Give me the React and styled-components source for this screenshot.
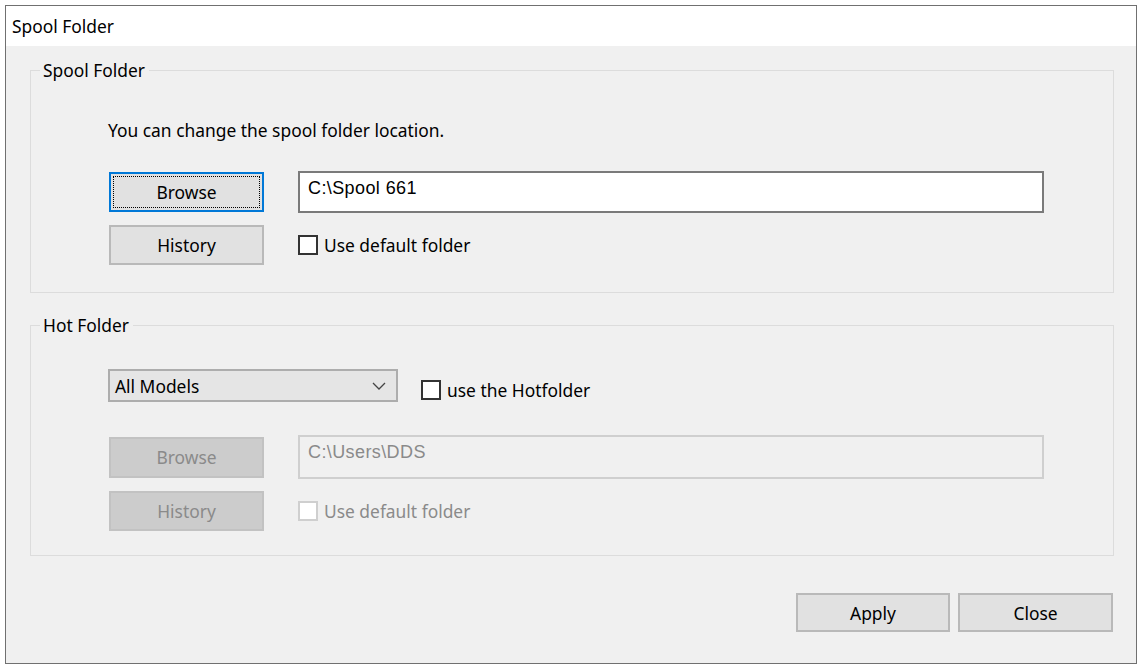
import styled, { createGlobalStyle, css } from 'styled-components';

const GlobalStyle = createGlobalStyle`
    html, body {
        margin: 0;
        padding: 0;
        background: #ffffff;
    }
    body {
        font-family: "Noto Sans", "Open Sans", sans-serif;
        color: #000;
    }
    * {
        box-sizing: border-box;
    }
`;

const UI_SIZE = '17.4px';

const Window = styled.div`
    margin: 5px 0 0 5px;
    width: 1132px;
    height: 659px;
    border: 1px solid #707070;
    display: flex;
    flex-direction: column;
`;

const TitleBar = styled.div`
    height: 40px;
    background: #fff;
    padding-left: 6px;
    display: flex;
    align-items: center;
    font-size: ${UI_SIZE};
`;

const Content = styled.div`
    flex: 1;
    background: #f0f0f0;
    padding: 13px 22px 0 24px;
    display: flex;
    flex-direction: column;
`;

const Group = styled.fieldset`
    margin: ${(p) => (p.$first ? '0' : '21px 0 0')};
    padding: 0;
    border: 1px solid #dcdcdc;
    min-width: 0;
`;

const Legend = styled.legend`
    margin-left: 9px;
    padding: 0 4px 0 3px;
    font-size: ${UI_SIZE};
    line-height: 22px;
`;

const GroupBody = styled.div`
    padding: ${(p) => p.$pad};
    padding-left: 78px;
`;

const Description = styled.p`
    margin: 0 0 30px -1px;
    font-size: ${UI_SIZE};
    line-height: 22px;
`;

const FieldGrid = styled.div`
    display: grid;
    grid-template-columns: 155px 746px;
    column-gap: 34px;
    row-gap: 12px;
    align-items: center;
    margin-top: ${(p) => p.$top || 0}px;
`;

const Button = styled.button`
    width: ${(p) => p.$w || 155}px;
    height: ${(p) => p.$h || 40}px;
    padding: 0;
    font-family: "Noto Sans", "Open Sans", sans-serif;
    font-size: ${UI_SIZE};
    color: #000;
    background: #e1e1e1;
    border: 2px solid #b9b9b9;
    border-radius: 0;
    cursor: default;

    ${(p) =>
        p.$focused &&
        css`
            border-color: #0078d7;
            outline: 1px dotted #000;
            outline-offset: -5px;
        `}

    &:disabled {
        color: #8a8a8a;
        background: #cccccc;
        border-color: #c2c2c2;
    }
`;

const TextInput = styled.div`
    height: ${(p) => p.$h}px;
    padding: 4px 8px 0;
    font-family: "Liberation Sans", Arial, sans-serif;
    font-size: 18px;
    letter-spacing: 0.4px;
    line-height: 22px;
    background: ${(p) => (p.$disabled ? '#f0f0f0' : '#fff')};
    color: ${(p) => (p.$disabled ? '#8a8a8a' : '#000')};
    border: 2px solid ${(p) => (p.$disabled ? '#cfcfcf' : '#7a7a7a')};
`;

const CheckLabel = styled.label`
    display: flex;
    align-items: center;
    gap: 6px;
    font-size: ${UI_SIZE};
    line-height: 22px;
    color: ${(p) => (p.$disabled ? '#8a8a8a' : '#000')};
    margin-top: ${(p) => p.$top || 0}px;
`;

const Box = styled.span`
    flex: none;
    width: 20px;
    height: 20px;
    background: #fff;
    border: 2px solid ${(p) => (p.$disabled ? '#cfcfcf' : '#333')};
`;

const TopRow = styled.div`
    display: flex;
    align-items: flex-start;
    gap: 23px;
    margin-left: -1px;
`;

const Select = styled.div`
    width: 290px;
    height: 33px;
    padding: 0 10px 0 5px;
    display: flex;
    align-items: center;
    justify-content: space-between;
    font-size: ${UI_SIZE};
    background: #e5e5e5;
    border: 2px solid #adadad;
`;

const Footer = styled.div`
    display: flex;
    justify-content: flex-end;
    gap: 8px;
    margin-top: 37px;
    padding-right: 1px;
`;

function Checkbox({ label, disabled, top }) {
    return (
        <CheckLabel $disabled={disabled} $top={top}>
            <Box $disabled={disabled} />
            {label}
        </CheckLabel>
    );
}

export default function App() {
    return (
        <>
            <GlobalStyle />
            <Window>
                <TitleBar>Spool Folder</TitleBar>
                <Content>
                    <Group $first>
                        <Legend>Spool Folder</Legend>
                        <GroupBody $pad="38px 0 27px">
                            <Description>You can change the spool folder location.</Description>
                            <FieldGrid>
                                <Button $focused>Browse</Button>
                                <TextInput $h={42}>C:\Spool 661</TextInput>
                                <Button>History</Button>
                                <Checkbox label="Use default folder" />
                            </FieldGrid>
                        </GroupBody>
                    </Group>

                    <Group>
                        <Legend>Hot Folder</Legend>
                        <GroupBody $pad="33px 0 24px">
                            <TopRow>
                                <Select>
                                    All Models
                                    <svg width="14" height="8" viewBox="0 0 14 8">
                                        <polyline points="1,1 7,7 13,1" fill="none" stroke="#444" strokeWidth="1.3" />
                                    </svg>
                                </Select>
                                <Checkbox label="use the Hotfolder" top={10} />
                            </TopRow>
                            <FieldGrid $top={33}>
                                <Button $h={41} disabled>Browse</Button>
                                <TextInput $h={44} $disabled>C:\Users\DDS</TextInput>
                                <Button disabled>History</Button>
                                <Checkbox label="Use default folder" disabled />
                            </FieldGrid>
                        </GroupBody>
                    </Group>

                    <Footer>
                        <Button $w={154} $h={39}>Apply</Button>
                        <Button $w={155} $h={39}>Close</Button>
                    </Footer>
                </Content>
            </Window>
        </>
    );
}
